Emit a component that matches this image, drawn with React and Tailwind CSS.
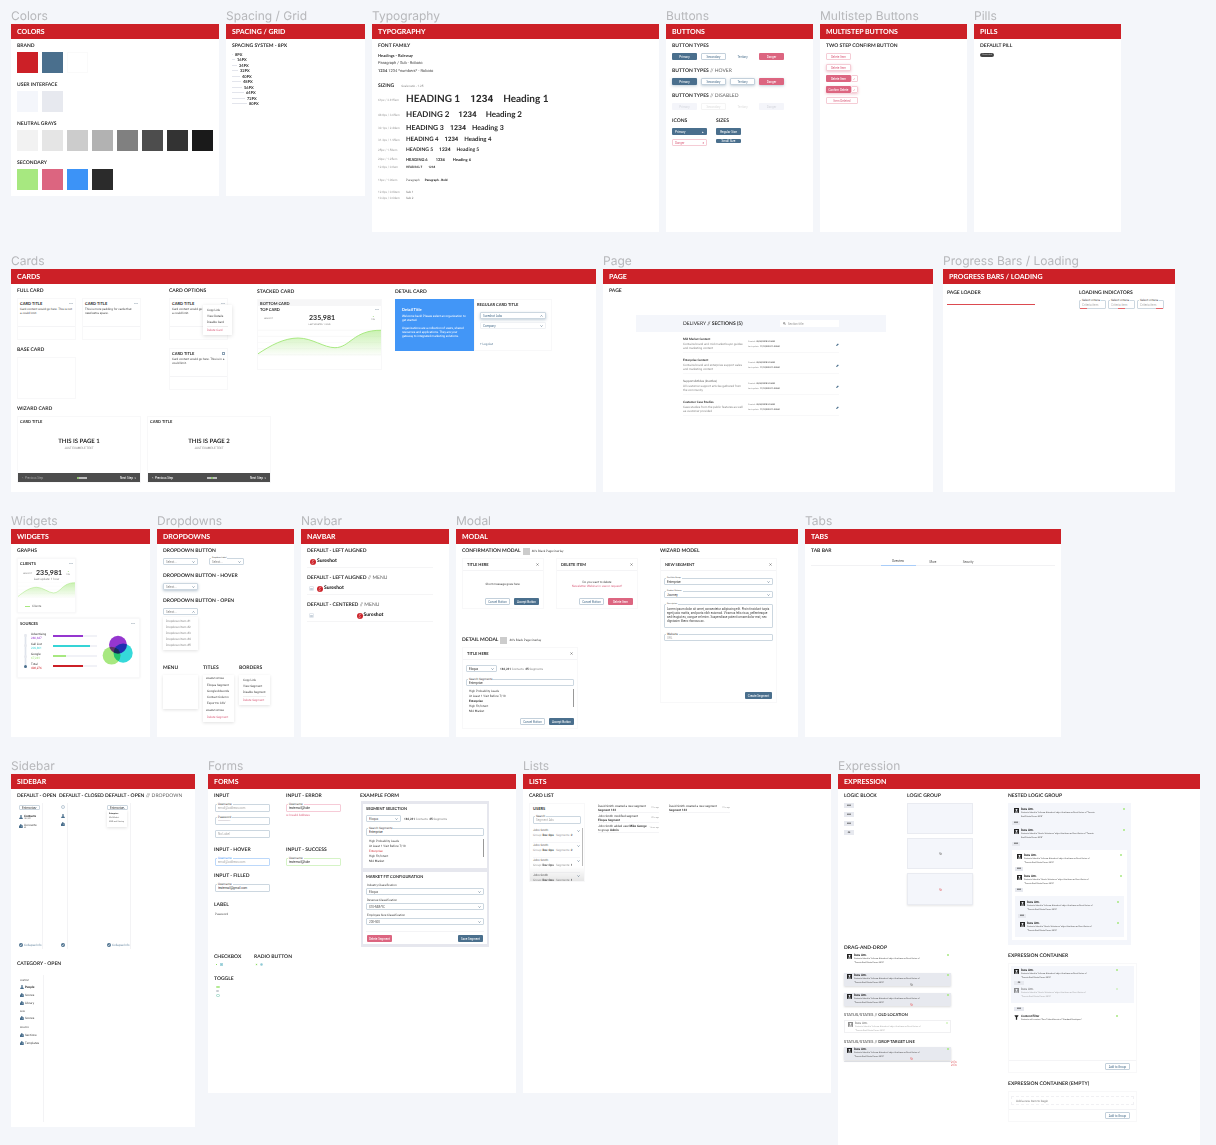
import React from "react";

const heading = "font-['Lato'] font-bold text-[#2b2b2b] whitespace-nowrap";

function Board({ label, title, className = "", boardClass = "", children }) {
  return (
    <section className={"flex min-w-0 flex-col " + className}>
      <h2 className="whitespace-nowrap font-['Inter'] text-[12px] leading-[16px] text-[#b7b8bb]">{label}</h2>
      <div className={"bg-white " + boardClass}>
        <h3 className="flex h-[15px] items-center bg-[#cc2027] pl-[6px] font-['Lato'] text-[7px] font-bold leading-[8px] text-white">
          {title}
        </h3>
        <div className="pl-[6px] pt-[4px]">{children}</div>
      </div>
    </section>
  );
}

function Sec({ title, note, gap = "gap-[4px]", className = "", children }) {
  return (
    <section className={"flex flex-col items-start " + gap + " " + className}>
      <h4 className={"text-[5px] leading-[6px] " + heading}>
        {title}
        {note && <span className="font-normal text-[#666]"> {note}</span>}
      </h4>
      {children}
    </section>
  );
}

const btnKinds = {
  primary: "bg-[#4a6f8d] text-white",
  secondary: "border border-[#c3d0db] bg-white text-[#4a6f8d]",
  tertiary: "text-[#4a6f8d]",
  danger: "bg-[#dc6580] text-white",
  dangerLine: "border border-[#f5ccd5] bg-white text-[#dc6580]",
  off: "bg-[#f4f5fa] text-[#d5d7de]",
  offLine: "border border-[#f4f4f4] bg-white text-[#dddddd]",
  offText: "text-[#dddddd]",
};

function Btn({ kind = "primary", size = "h-[7px] w-[25px]", className = "justify-center", children, ...rest }) {
  return (
    <button
      type="button"
      className={"flex shrink-0 items-center whitespace-nowrap rounded-[1px] text-[3px] leading-[4px] " + btnKinds[kind] + " " + size + " " + className}
      {...rest}
    >
      {children}
    </button>
  );
}

function Chevron({ className = "", up }) {
  return (
    <svg viewBox="0 0 6 4" className={"h-[2px] w-[3px] " + className} fill="none" stroke="#5f7a90" strokeWidth="1.4" aria-hidden="true">
      <path d={up ? "M1 3 L3 1 L5 3" : "M1 1 L3 3 L5 1"} />
    </svg>
  );
}

const borders = {
  plain: "border-[#ccd7e0]",
  soft: "border-[#f0f2f5]",
  blue: "border-[#bcd8fa]",
  error: "border-[#f6cbd7]",
  success: "border-[#d5f3c6]",
};

function Pick({ value, label, floating, size = "h-[7px] w-[35px]", tone = "plain", up, color = "text-[#888]", className = "" }) {
  return (
    <label className={"relative block shrink-0 rounded-[1px] border bg-white " + borders[tone] + " " + size + " " + className}>
      {floating && (
        <span className="absolute -top-[3px] left-[1px] whitespace-nowrap bg-white px-[1px] text-[2px] leading-[4px] text-[#444]">{floating}</span>
      )}
      <select aria-label={label || floating} className={"block h-full w-full appearance-none bg-transparent pl-[2px] text-[3px] leading-[4px] outline-none " + color}>
        <option>{value}</option>
      </select>
      <Chevron up={up} className="pointer-events-none absolute right-[2px] top-1/2 -translate-y-1/2" />
    </label>
  );
}

function Field({ label, value, placeholder, tone = "plain", size = "h-[8px] w-[55px]", labelColor = "text-[#444]", aria, className = "" }) {
  return (
    <label className={"relative block shrink-0 rounded-[1px] border bg-white " + borders[tone] + " " + size + " " + className}>
      {label && (
        <span className={"absolute -top-[3px] left-[1px] whitespace-nowrap bg-white px-[1px] text-[3px] leading-[4px] " + labelColor}>{label}</span>
      )}
      <input
        aria-label={aria || label}
        defaultValue={value}
        placeholder={placeholder}
        className="block h-full w-full bg-transparent px-[2px] text-[3px] leading-[4px] text-[#333] outline-none placeholder:text-[#aaa]"
      />
    </label>
  );
}

function Dots() {
  return (
    <svg viewBox="0 0 10 3" className="h-[1px] w-[4px]" fill="#6d8294" aria-hidden="true">
      <circle cx="1.5" cy="1.5" r="1.3" /><circle cx="5" cy="1.5" r="1.3" /><circle cx="8.5" cy="1.5" r="1.3" />
    </svg>
  );
}

function Cross() {
  return (
    <svg viewBox="0 0 8 8" className="h-[3px] w-[3px]" stroke="#555" strokeWidth="1.3" aria-hidden="true">
      <path d="M1 1 L7 7 M7 1 L1 7" />
    </svg>
  );
}

/* ---------- Colors ---------- */
const palettes = [
  ["BRAND", ["bg-[#cc2027]", "bg-[#4a6f8d]", "bg-white border border-[#fafafa]"]],
  ["USER INTERFACE", ["bg-[#f4f6fb]", "bg-[#e7e9ef]"]],
  ["NEUTRAL GRAYS", ["bg-[#f2f2f2]", "bg-[#e5e5e5]", "bg-[#cccccc]", "bg-[#b2b2b2]", "bg-[#808080]", "bg-[#4d4d4d]", "bg-[#333333]", "bg-[#1a1a1a]"]],
  ["SECONDARY", ["bg-[#a7e880]", "bg-[#dc6580]", "bg-[#3c93f7]", "bg-[#2b2b2b]"]],
];

function Colors() {
  return (
    <div className="flex flex-col gap-[9px]">
      {palettes.map(([name, list]) => (
        <Sec key={name} title={name} gap="gap-[3px]">
          <div className="flex gap-[4px]">
            {list.map((c) => <div key={c} className={"size-[21px] " + c} />)}
          </div>
        </Sec>
      ))}
    </div>
  );
}

/* ---------- Spacing ---------- */
const steps = [["8PX", 1], ["16PX", 3], ["24PX", 5], ["32PX", 6], ["40PX", 8], ["48PX", 9], ["56PX", 10], ["64PX", 12], ["72PX", 13], ["80PX", 15]];

function Spacing() {
  return (
    <Sec title="SPACING SYSTEM - 8PX" gap="gap-[3px]">
      <ul className="flex h-[54px] flex-col justify-between">
        {steps.map(([n, w]) => (
          <li key={n} className={"flex items-center gap-[2px] text-[4px] leading-[5px] " + heading}>
            <span className="h-px bg-[#e3e5ec]" style={{ width: w }} />
            {n}
          </li>
        ))}
      </ul>
    </Sec>
  );
}

/* ---------- Typography ---------- */
const sizes = [
  ["61px / 3.815em", "HEADING 1", "Heading 1", "h-[15px]", "text-[10px] leading-[12px] gap-[10px]"],
  ["48.8px / 3.05em", "HEADING 2", "Heading 2", "h-[15px]", "text-[8px] leading-[10px] gap-[9px]"],
  ["39.1px / 2.44em", "HEADING 3", "Heading 3", "h-[12px]", "text-[7px] leading-[8px] gap-[6px]"],
  ["31.3px / 1.95em", "HEADING 4", "Heading 4", "h-[11px]", "text-[6px] leading-[7px] gap-[6px]"],
  ["25px / 1.56em", "HEADING 5", "Heading 5", "h-[10px]", "text-[5px] leading-[6px] gap-[6px]"],
  ["20px / 1.25em", "HEADING 6", "Heading 6", "h-[8px]", "text-[4px] leading-[5px] gap-[8px]"],
  ["12.8px / 0.8em", "HEADING 7", "", "h-[7px]", "text-[3px] leading-[4px] gap-[6px]"],
];

function SizeLabel({ children }) {
  return <span className="w-[28px] shrink-0 whitespace-nowrap text-[3px] leading-[4px] text-[#999]">{children}</span>;
}

function Typography() {
  return (
    <div>
      <Sec title="FONT FAMILY">
        <div className="text-[4px] leading-[8px] text-[#444]">
          <p className="font-['Lato'] font-bold leading-[5px] text-[#333]">Headings - Raleway</p>
          <p className="leading-[9px]">Paragraph / Sub - Roboto</p>
          <p className="leading-[8px]"><b>1234</b> 1234 *numbers* - Roboto</p>
        </div>
      </Sec>
      <div className="mt-[8px] flex items-center gap-[7px]">
        <h4 className={"text-[5px] leading-[6px] " + heading}>SIZING</h4>
        <span className="text-[3px] leading-[4px] text-[#888]">Scale ratio - 1.25</span>
      </div>
      <div className="mt-[3px]">
        {sizes.map(([px, a, b, row, cls]) => (
          <div key={a} className={"flex items-center " + row}>
            <SizeLabel>{px}</SizeLabel>
            <div className={"flex items-baseline " + heading + " " + cls}>
              <span>{a}</span>
              <span className="font-['Roboto']">1234</span>
              {b && <span>{b}</span>}
            </div>
          </div>
        ))}
        <div className="mt-[7px] flex items-center">
          <SizeLabel>16px / 1.00em</SizeLabel>
          <span className="text-[3px] leading-[6px] text-[#555]">Paragraph</span>
          <b className="ml-[5px] text-[3px] leading-[6px] text-[#222]">Paragraph - Bold</b>
        </div>
        <div className="mt-[6px] flex items-center leading-[6px]">
          <SizeLabel>12.8px / 0.80em</SizeLabel><span className="text-[#777]">Sub 1</span>
        </div>
        <div className="flex items-center leading-[6px]">
          <SizeLabel>10.2px / 0.64em</SizeLabel><span className="text-[#777]">Sub 2</span>
        </div>
      </div>
    </div>
  );
}

/* ---------- Buttons ---------- */
function ButtonRow({ kinds, shadow = "", disabled }) {
  const names = ["Primary", "Secondary", "Tertiary", "Danger"];
  return (
    <div className="flex gap-[4px]">
      {names.map((n, i) => (
        <Btn key={n} kind={kinds[i]} disabled={disabled} className={"justify-center " + shadow}>{n}</Btn>
      ))}
    </div>
  );
}

function Buttons() {
  return (
    <div className="flex flex-col gap-[8px]">
      <Sec title="BUTTON TYPES"><ButtonRow kinds={["primary", "secondary", "tertiary", "danger"]} /></Sec>
      <Sec title="BUTTON TYPES" note="// HOVER">
        <ButtonRow kinds={["primary", "secondary", "secondary", "danger"]} shadow="shadow-[0_1px_3px_rgba(74,111,141,0.35)]" />
      </Sec>
      <Sec title="BUTTON TYPES" note="// DISABLED"><ButtonRow kinds={["off", "offLine", "offText", "off"]} disabled /></Sec>
      <div className="flex gap-[9px]">
        <Sec title="ICONS">
          <Btn size="h-[7px] w-[35px]" className="justify-between px-[3px]">Primary <span>▴</span></Btn>
          <Btn kind="dangerLine" size="h-[7px] w-[35px]" className="justify-between px-[2px]">Danger <span>×</span></Btn>
        </Sec>
        <Sec title="SIZES">
          <Btn>Regular Size</Btn>
          <Btn size="h-[4px] w-[25px]">Small Size</Btn>
        </Sec>
      </div>
    </div>
  );
}

function Multistep() {
  return (
    <Sec title="TWO STEP CONFIRM BUTTON">
      <Btn kind="dangerLine">Delete Item</Btn>
      <Btn kind="dangerLine" className="justify-center shadow-[0_1px_3px_rgba(220,101,128,0.4)]">Delete Item</Btn>
      <div className="flex">
        <Btn kind="danger">Delete Item</Btn>
        <Btn kind="dangerLine" size="size-[7px]">✓</Btn>
      </div>
      <div className="flex shadow-[0_1px_3px_rgba(220,101,128,0.4)]">
        <Btn kind="danger">Confirm Delete</Btn>
        <Btn kind="dangerLine" size="size-[7px]">✓</Btn>
      </div>
      <Btn kind="dangerLine" size="h-[7px] w-[32px]">Item Deleted</Btn>
    </Sec>
  );
}

/* ---------- Cards ---------- */
const cardBox = "border border-[#f8f8f9] bg-white";

function Title({ children, className = "" }) {
  return <h5 className={"text-[4px] leading-[5px] " + heading + " " + className}>{children}</h5>;
}

function TextCard({ icon, text, children }) {
  return (
    <article className={"relative flex h-[42px] w-[59px] flex-col " + cardBox}>
      <div className="flex items-center justify-between px-[2px] pt-[2px]">
        <Title>CARD TITLE</Title>
        {icon}
      </div>
      <p className="grow px-[2px] pt-[1px] text-[3px] leading-[4px] text-[#444]">{text}</p>
      <div className="h-[13px] border-t border-[#f4f4f6]" />
      {children}
    </article>
  );
}

const curve = "M0 77 C40 50 80 28 122 28 C165 28 200 58 234 58 C280 58 290 3 374 4";

function Area({ id, className }) {
  return (
    <svg viewBox="0 0 374 90" preserveAspectRatio="none" className={"block w-full " + className} aria-hidden="true">
      <defs>
        <linearGradient id={id} x1="0" y1="0" x2="0" y2="1">
          <stop offset="0" stopColor="#a7e880" stopOpacity="0.6" />
          <stop offset="1" stopColor="#a7e880" stopOpacity="0" />
        </linearGradient>
      </defs>
      <path d="M0 4H374M0 23H374M0 42H374M0 61H374M0 80H374" stroke="#f6f6f6" strokeWidth="2" />
      <path d={curve + " V86 H0 Z"} fill={"url(#" + id + ")"} />
      <path d={curve} fill="none" stroke="#a7e880" strokeWidth="3" />
    </svg>
  );
}

function WizardCard({ n }) {
  return (
    <article className={"flex h-[67px] w-[124px] flex-col " + cardBox}>
      <Title className="px-[2px] pt-[2px]">CARD TITLE</Title>
      <div className="flex grow flex-col items-center pt-[14px]">
        <strong className={"text-[6px] leading-[7px] " + heading}>THIS IS PAGE {n}</strong>
        <span className="text-[3px] leading-[6px] text-[#888]">JUST EXAMPLE TEXT</span>
      </div>
      <div className="flex h-[9px] items-center justify-between bg-[#4d4d4d] px-[4px] text-[3px] text-white">
        <button type="button" className={n === 1 ? "text-[#a0a0a0]" : "text-white"}>« &nbsp;Previous Step</button>
        <span className="flex">
          {[1, 2, 3, 4, 5].map((i) => (
            <i key={i} className={"size-[2px] rounded-full " + (i === (n === 1 ? 1 : 3) ? "bg-[#a7e880]" : "bg-[#e2e2e2]")} />
          ))}
        </span>
        <button type="button">Next Step &nbsp;»</button>
      </div>
    </article>
  );
}

function Cards() {
  return (
    <div className="flex flex-col gap-[7px]">
      <div className="flex items-start">
        <div className="flex w-[152px] shrink-0 flex-col gap-[7px]">
          <Sec title="FULL CARD">
            <div className="flex gap-[6px]">
              <TextCard icon={<Dots />} text="Card content would go here. This is not a could limit." />
              <TextCard icon={<Dots />} text="This is more padding for cards that need extra space." />
            </div>
          </Sec>
          <Sec title="BASE CARD"><div className={"h-[42px] w-[59px] " + cardBox} /></Sec>
        </div>
        <div className="flex w-[88px] shrink-0 flex-col gap-[8px]">
          <Sec title="CARD OPTIONS">
            <TextCard icon={<Dots />} text="Card content would go here. This is not a could limit.">
              <ul className="absolute left-[33px] top-[6px] w-[29px] bg-white px-[4px] py-[2px] text-[3px] leading-[6px] text-[#444] shadow-[0_1px_4px_rgba(0,0,0,0.14)]">
                <li>Copy Link</li>
                <li>View Details</li>
                <li>Disable Card</li>
                <li className="mt-px border-t border-[#eee] text-[#dc6580]">Delete Card</li>
              </ul>
            </TextCard>
          </Sec>
          <TextCard icon={<span className="size-[3px] border border-[#8aa0b3]" />} text="Card content would go here. This is in a could limit." />
        </div>
        <Sec title="STACKED CARD" className="w-[138px] shrink-0 pt-px">
          <article className={"flex h-[71px] w-[125px] flex-col " + cardBox}>
            <div className="h-[6px] bg-[#f6f6f7] px-[2px] pt-[1px]"><Title>BOTTOM CARD</Title></div>
            <div className="flex items-center justify-between px-[2px] pt-[1px]"><Title>TOP CARD</Title><Dots /></div>
            <div className="flex items-center justify-between px-[6px] pt-[3px] text-[2px] text-[#777]">
              <span>JAN 2017</span>
              <strong className="font-['Lato'] text-[7px] leading-[7px] text-[#333]">235,981</strong>
              <span className="text-center leading-[3px]"><span className="block text-[#77c94a]">▴</span>19%</span>
            </div>
            <p className="pt-px text-center text-[2px] leading-[4px] text-[#777]">LAST UPDATED: 1 HOUR</p>
            <Area id="stackFill" className="mt-[2px] h-[29px]" />
          </article>
        </Sec>
        <Sec title="DETAIL CARD" className="pt-px">
          <article className="flex h-[52px] w-[157px]">
            <div className="w-[79px] bg-[#4296f7] px-[7px] pt-[8px] text-[3px] leading-[4px] text-white">
              <h5 className="pb-[2px] font-['Lato'] text-[4px] font-bold leading-[5px]">Detail Title</h5>
              <p>Welcome back! Please select an organization to get started.</p>
              <p className="pt-[4px]">Organizations are a collection of users, shared resources and applications. They are your gateway to integrated marketing solutions.</p>
            </div>
            <div className={"flex grow flex-col px-[2px] " + cardBox}>
              <Title className="pt-[2px]">REGULAR CARD TITLE</Title>
              <div className="flex flex-col gap-[3px] px-[3px] pt-[5px]">
                <Pick label="Organization" value="Sureshot Labs" size="h-[7px] w-full" color="text-[#4a6f8d]" className="shadow-[0_1px_3px_rgba(74,111,141,0.35)]" up />
                <Pick label="Company" value="Company" size="h-[7px] w-full" tone="soft" color="text-[#4a6f8d]" />
                <a href="#logout" className="pt-[10px] text-[#4a6f8d]">+ Log Out</a>
              </div>
            </div>
          </article>
        </Sec>
      </div>
      <Sec title="WIZARD CARD">
        <div className="flex gap-[6px]"><WizardCard n={1} /><WizardCard n={2} /></div>
      </Sec>
    </div>
  );
}

/* ---------- Page ---------- */
const pageRows = [
  ["Mid Market Content", "Contains brand and mid market buyer guides and marketing content", true],
  ["Enterprise Content", "Contains brand and enterprise support sales and marketing content", true],
  ["Support Articles (Inactive)", "All customer support articles gathered from the community", false],
  ["Customer Case Studies", "Case studies from the public features as well as customer provided", true],
];

function PageBoard() {
  return (
    <div>
      <Sec title="PAGE" />
      <div className="ml-[27px] mt-[21px] w-[250px]">
        <div className="flex h-[17px] items-center justify-between bg-[#f4f6fb] pl-[47px] pr-[47px]">
          <h5 className={"text-[5px] leading-[6px] " + heading}><span className="font-normal">DELIVERY //</span> SECTIONS (5)</h5>
          <label className="flex h-[7px] w-[59px] items-center gap-[2px] bg-white px-[3px]">
            <svg viewBox="0 0 8 8" className="size-[3px]" fill="none" stroke="#333" strokeWidth="1.2" aria-hidden="true"><circle cx="3.3" cy="3.3" r="2.4" /><path d="M5 5 L7.5 7.5" /></svg>
            <input aria-label="Search" placeholder="Section title" className="w-full bg-transparent text-[3px] leading-[4px] outline-none placeholder:text-[#999]" />
          </label>
        </div>
        <ul className="px-[47px]">
          {pageRows.map(([t, d, on]) => (
            <li key={t} className="flex h-[21px] items-start border-b border-[#f8f8f9] pt-[5px] text-[3px] leading-[4px] text-[#888]">
              <div className="w-[65px]">
                <h6 className={"font-['Lato'] " + (on ? "font-bold text-[#222]" : "text-[#555]")}>{t}</h6>
                <p className="w-[60px] pt-px">{d}</p>
              </div>
              <dl className="grow pt-[3px] text-[2px] leading-[5px]">
                <div className="flex gap-px"><dt>Created:</dt><dd className="font-bold text-[#555]">09/24/2018 9:10AM</dd></div>
                <div className="flex gap-px"><dt>Last update:</dt><dd className="font-bold text-[#555]">11/12/2018 11:22AM</dd></div>
              </dl>
              <button type="button" aria-label="Edit" className="mt-[6px]">
                <svg viewBox="0 0 8 8" className="size-[3px]" fill="#4a6f8d"><path d="M0 8 L1 5 L5 1 L7.5 3.2 L3.4 7.2 Z" /></svg>
              </button>
            </li>
          ))}
        </ul>
      </div>
    </div>
  );
}

function Progress() {
  const pos = ["justify-start", "justify-center", "justify-end"];
  return (
    <div className="-ml-[2px] flex items-start pt-[2px]">
      <Sec title="PAGE LOADER" className="w-[132px]">
        <div className="mt-[4px] h-px w-[88px] bg-[#dc4a50]" />
      </Sec>
      <Sec title="LOADING INDICATORS">
        <div className="flex gap-[2px]">
          {pos.map((p) => (
            <div key={p} className="relative">
              <Field label="Select criteria" placeholder="Criteria item" size="h-[9px] w-[27px]" />
              <div className={"absolute inset-x-[1px] bottom-0 flex " + p}><span className="h-px w-[7px] bg-[#e5656a]" /></div>
            </div>
          ))}
        </div>
      </Sec>
    </div>
  );
}

/* ---------- Widgets ---------- */
const sources = [
  ["Advertising", "240,647", "bg-[#9536cf]", "text-[#9536cf]", "w-[30px]"],
  ["Call List", "209,801", "bg-[#35d4d6]", "text-[#35d4d6]", "w-[37px]"],
  ["Google", "67,241", "bg-[#a7e880]", "text-[#a7e880]", "w-[13px]"],
  ["Total", "498,276", "bg-[#cc2027]", "text-[#cc2027]", "w-[30px]"],
];

function Widgets() {
  return (
    <div className="flex flex-col gap-[5px]">
      <Sec title="GRAPHS">
        <article className={"flex h-[55px] w-[59px] flex-col shadow-[0_0_2px_rgba(0,0,0,0.06)] " + cardBox}>
          <div className="flex items-center justify-between px-[2px] pt-[2px]"><Title>CLIENTS</Title><Dots /></div>
          <div className="flex items-center justify-between px-[5px] pt-[4px] text-[2px] text-[#777]">
            <span>JAN 2017</span>
            <strong className="font-['Lato'] text-[7px] leading-[7px] text-[#333]">235,981</strong>
            <span className="text-center leading-[3px]"><span className="block text-[#77c94a]">▴</span>19%</span>
          </div>
          <p className="text-center text-[3px] leading-[4px] text-[#888]">Last update: 1 hour</p>
          <Area id="clientFill" className="mt-px h-[17px]" />
          <div className="flex items-center gap-[2px] px-[7px] pt-[5px] text-[#666]"><i className="h-px w-[5px] bg-[#a7e880]" />Clients</div>
        </article>
      </Sec>
      <article className={"h-[60px] w-[123px] px-[2px] pt-[2px] shadow-[0_0_2px_rgba(0,0,0,0.08)] " + cardBox}>
        <div className="flex items-center justify-between pr-[2px]"><Title>SOURCES</Title><Dots /></div>
        <div className="flex items-start pt-[4px]">
          <div className="ml-[4px] mt-[4px] flex h-[34px] w-[3px] flex-col items-center justify-between bg-gradient-to-r from-white via-[#dfe4ec] to-white">
            {[0, 1, 2, 3].map((i) => <i key={i} className={"size-[3px] rounded-full " + (i === 3 ? "bg-[#4a6f8d]" : "bg-[#e7e9ef]")} />)}
          </div>
          <ul className="flex w-[72px] shrink-0 flex-col pl-[4px] pt-px">
            {sources.map(([n, v, bg, tx, w]) => (
              <li key={n} className="flex h-[10px] items-center text-[3px] leading-[4px]">
                <div className="w-[22px] shrink-0 text-[#333]">{n}<div className={tx}>{v}</div></div>
                <div className="h-[2px] w-[44px] bg-[#f1f2f7]"><div className={"h-[2px] " + bg + " " + w} /></div>
              </li>
            ))}
          </ul>
          <svg viewBox="0 0 100 96" className="ml-[3px] mt-[5px] h-[31px] w-[32px] shrink-0" aria-hidden="true">
            <circle cx="50" cy="30" r="28" fill="#9536cf" />
            <circle cx="66" cy="56" r="30" fill="#35d9da" style={{ mixBlendMode: "multiply" }} />
            <circle cx="30" cy="64" r="28" fill="#a7e880" style={{ mixBlendMode: "multiply" }} />
          </svg>
        </div>
      </article>
    </div>
  );
}

/* ---------- Dropdowns ---------- */
const menuBox = "bg-white shadow-[0_1px_3px_rgba(0,0,0,0.12)]";

function Dropdowns() {
  return (
    <div className="flex flex-col">
      <Sec title="DROPDOWN BUTTON">
        <div className="flex gap-[11px]">
          <Pick label="Default" value="Select..." />
          <Pick floating="Dropdown Label" value="Select..." />
        </div>
      </Sec>
      <Sec title="DROPDOWN BUTTON - HOVER" className="mt-[8px]">
        <Pick label="Hover" value="Select..." className="shadow-[0_1px_3px_rgba(74,111,141,0.4)]" />
      </Sec>
      <Sec title="DROPDOWN BUTTON - OPEN" className="mt-[8px]">
        <Pick label="Open" value="Select..." up />
        <ul className={"-mt-[2px] h-[33px] w-[35px] px-[3px] py-px text-[3px] leading-[6px] text-[#888] " + menuBox}>
          {[1, 2, 3, 4, 5].map((n) => <li key={n}>Dropdown Item #{n}</li>)}
        </ul>
      </Sec>
      <div className="mt-[15px] flex items-start">
        <Sec title="MENU" className="w-[40px]"><div className={"h-[34px] w-[35px] " + menuBox} /></Sec>
        <Sec title="TITLES" className="w-[36px]">
          <ul className={"w-[31px] px-[4px] py-px text-[3px] leading-[6px] text-[#444] " + menuBox}>
            <li className="-ml-px whitespace-nowrap text-[2px] text-[#222]">SEGMENT OPTIONS</li>
            <li>Eloqua Segment</li><li>Google Adwords</li><li>Contact Column</li><li>Export to CSV</li>
            <li className="-ml-px mt-[2px] whitespace-nowrap text-[2px] text-[#222]">SEGMENT OPTIONS</li>
            <li className="pb-px text-[#dc6580]">Delete Segment</li>
          </ul>
        </Sec>
        <Sec title="BORDERS">
          <ul className={"w-[31px] whitespace-nowrap px-[4px] py-[2px] text-[3px] leading-[6px] text-[#444] " + menuBox}>
            <li>Copy Link</li><li>View Segment</li><li>Disable Segment</li>
            <li className="mt-px border-t border-[#f0f0f0] text-[#dc6580]">Delete Segment</li>
          </ul>
        </Sec>
      </div>
    </div>
  );
}

/* ---------- Navbar ---------- */
function Logo() {
  return (
    <span className="flex items-center gap-px font-['Lato'] text-[5px] font-black leading-[7px] text-[#1a1a1a]">
      <svg viewBox="0 0 24 24" className="size-[6px]" aria-hidden="true">
        <circle cx="12" cy="12" r="12" fill="#cc2027" />
        <path d="M17 7 C10 4 6 9 11 12 C17 15 12 20 6 16 M12 5 V2 M12 22 V19" fill="none" stroke="#fff" strokeWidth="1.6" />
      </svg>
      Sureshot
    </span>
  );
}

function Burger() {
  return (
    <button type="button" aria-label="Menu" className="flex size-[5px] items-center justify-center rounded-[1px] border border-[#e3e8ee]">
      <svg viewBox="0 0 8 6" className="h-[2px] w-[3px]" stroke="#8aa0b3" strokeWidth="1.2" aria-hidden="true"><path d="M0 1H8M0 3H8M0 5H8" /></svg>
    </button>
  );
}

function Navbar() {
  const bar = "flex h-[14px] w-[126px] items-center border-b border-[#f5f5f6]";
  return (
    <div className="flex flex-col gap-[7px]">
      <Sec title="DEFAULT - LEFT ALIGNED" gap="gap-0"><nav className={bar + " pl-[3px] pt-[2px]"}><Logo /></nav></Sec>
      <Sec title="DEFAULT - LEFT ALIGNED" note="// MENU" gap="gap-0"><nav className={bar + " gap-[3px] pl-[2px] pt-[2px]"}><Burger /><Logo /></nav></Sec>
      <Sec title="DEFAULT - CENTERED" note="// MENU" gap="gap-0">
        <nav className={bar + " pl-[2px] pr-[7px] pt-[2px]"}><Burger /><div className="flex grow justify-center"><Logo /></div></nav>
      </Sec>
    </div>
  );
}

/* ---------- Modal ---------- */
function Dialog({ title, size, children }) {
  return (
    <article className={"flex flex-col " + cardBox + " " + size}>
      <div className="flex h-[12px] items-center justify-between border-b border-[#f4f4f6] px-[4px]">
        <Title>{title}</Title>
        <button type="button" aria-label="Close"><Cross /></button>
      </div>
      {children}
    </article>
  );
}

function OverlayTitle({ children }) {
  return (
    <div className="flex h-[6px] items-center gap-[2px]">
      <h4 className={"text-[5px] leading-[6px] " + heading}>{children}</h4>
      <i className="size-[7px] bg-[#cccccc]" />
      <span className="text-[3px] leading-[4px] text-[#444]">40% Black Page Overlay</span>
    </div>
  );
}

function SegmentList({ hot = "font-bold text-[#222]" }) {
  return (
    <div className="flex justify-between">
      <ul className="pl-[3px] text-[3px] leading-[5px] text-[#444]">
        <li>High Probability Leads</li><li>At Least 1 Visit Before 7/18</li><li className={hot}>Enterprise</li><li>High Fit/Intent</li><li>Mid Market</li>
      </ul>
      <i className="h-[18px] w-px bg-[#999]" />
    </div>
  );
}

function Counts() {
  return <span className="whitespace-nowrap text-[3px] leading-[4px] text-[#888]"><b className="text-[#444]">182,231</b> Contacts &nbsp;<b className="text-[#444]">45</b> Segments</span>;
}

function Modals() {
  return (
    <div className="flex items-start">
      <div className="flex w-[198px] shrink-0 flex-col">
        <OverlayTitle>CONFIRMATION MODAL</OverlayTitle>
        <div className="mt-[4px] flex gap-[12px]">
          <Dialog title="TITLE HERE" size="h-[51px] w-[82px]">
            <p className="grow pt-[11px] text-center text-[3px] leading-[4px] text-[#444]">Short message goes here.</p>
            <div className="flex justify-end gap-[4px] px-[4px] pb-[3px]"><Btn kind="secondary">Cancel Button</Btn><Btn>Accept Button</Btn></div>
          </Dialog>
          <Dialog title="DELETE ITEM" size="h-[51px] w-[82px]">
            <p className="grow pt-[9px] text-center text-[3px] leading-[4px] text-[#444]">Do you want to delete<br /><span className="text-[#dc6580]">Newsletter Webinar in use or request?</span></p>
            <div className="flex justify-end gap-[4px] px-[4px] pb-[3px]"><Btn kind="secondary">Cancel Button</Btn><Btn kind="danger">Delete Item</Btn></div>
          </Dialog>
        </div>
        <div className="mt-[28px]"><OverlayTitle>DETAIL MODAL</OverlayTitle></div>
        <div className="mt-[4px]">
          <Dialog title="TITLE HERE" size="h-[82px] w-[116px]">
            <div className="flex grow flex-col px-[3px] pt-[5px]">
              <div className="flex items-center gap-[3px]"><Pick label="Source" value="Eloqua" size="h-[7px] w-[31px]" color="text-[#333]" /><Counts /></div>
              <Field label="Search Segments" value="Enterprise" size="h-[7px] w-full" className="mb-[3px] mt-[7px]" />
              <SegmentList />
            </div>
            <div className="flex justify-end gap-[4px] px-[3px] pb-[3px]"><Btn kind="secondary">Cancel Button</Btn><Btn>Accept Button</Btn></div>
          </Dialog>
        </div>
      </div>
      <Sec title="WIZARD MODEL">
        <Dialog title="NEW SEGMENT" size="h-[145px] w-[117px]">
          <div className="flex grow flex-col gap-[6px] px-[3px] pt-[7px]">
            <Pick floating="Portfolio Group" value="Enterprise" size="h-[7px] w-full" color="text-[#333]" />
            <Pick floating="Product Release" value="Journey" size="h-[7px] w-full" color="text-[#333]" />
            <label className="relative block h-[24px] rounded-[1px] border border-[#ccd7e0]">
              <span className="absolute -top-[3px] left-[1px] bg-white px-[1px] text-[2px] leading-[4px] text-[#444]">Description</span>
              <textarea
                className="block h-full w-full resize-none overflow-hidden bg-transparent px-[2px] pt-[2px] text-[3px] leading-[4px] text-[#444] outline-none"
                defaultValue="Lorem ipsum dolor sit amet, consectetur adipiscing elit. Proin tincidunt turpis eget justo mattis, sed porta nibh euismod. Vivamus felis risus, pellentesque sed feugiat eu, congue vel enim. Suspendisse potenti ornare dolor erat, nec dignissim libero rhoncus ac."
              />
            </label>
            <Field label="Website" placeholder="URL" size="h-[7px] w-full" />
          </div>
          <div className="flex justify-end px-[4px] pb-[3px]"><Btn size="h-[7px] w-[27px]">Create Segment</Btn></div>
        </Dialog>
      </Sec>
    </div>
  );
}

/* ---------- Tabs ---------- */
function Tabs() {
  return (
    <Sec title="TAB BAR">
      <div role="tablist" className="flex w-[244px] justify-center border-b border-[#f2f2f4] text-[3px] leading-[6px]">
        {["Overview", "More", "Security"].map((t, i) => (
          <button key={t} role="tab" type="button" aria-selected={i === 0} className={"-mb-px w-[35px] pb-px " + (i === 0 ? "border-b border-[#a9cdf9] text-[#444]" : "text-[#555]")}>{t}</button>
        ))}
      </div>
    </Sec>
  );
}

/* ---------- Sidebar ---------- */
function Glyph({ kind, size = "size-[4px]", color = "#4a6f8d" }) {
  return (
    <svg viewBox="0 0 16 16" className={"shrink-0 " + size} fill={color} aria-hidden="true">
      {kind === "user" && <path d="M8 0a4 4 0 0 1 2 7v2l5 3v4H1v-4l5-3V7a4 4 0 0 1 2-7Z" />}
      {kind === "org" && <path d="M0 6h4V1h6v4h5v11H0Z M10 8v2h2V8Z" fillRule="evenodd" />}
      {kind === "check" && <path fillRule="evenodd" d="M8 0a8 8 0 1 1 0 16A8 8 0 0 1 8 0ZM3 8l4 4 6-6-2-1-4 4-2-2Z" />}
    </svg>
  );
}

function SideItem({ kind, children, sub, bold }) {
  return (
    <li className="flex items-center gap-[1px] text-[3px] leading-[4px] text-[#444]">
      <Glyph kind={kind} />
      {children && (
        <a href="#item" className={bold ? "font-bold text-[#222]" : ""}>{children}{sub && <span className="block text-[2px] font-normal leading-[2px] text-[#666]">{sub}</span>}</a>
      )}
    </li>
  );
}

function Panel({ size, children, foot }) {
  return (
    <nav className={"flex h-[146px] flex-col border-r border-[#f3f3f5] " + size}>
      <div className="flex grow flex-col gap-[4px] pl-[2px] pt-[2px]">{children}</div>
      <div className="flex items-center gap-[1px] whitespace-nowrap pb-[2px] pl-[2px] text-[3px] leading-[4px] text-[#6b8aa3]"><Glyph kind="check" />{foot}</div>
    </nav>
  );
}

function Sidebar() {
  return (
    <div>
      <div className="flex items-start">
        <Sec title="DEFAULT - OPEN" className="w-[42px] shrink-0">
          <Panel size="w-[26px]" foot="Collapse Info">
            <Pick label="Account" value="Enterprise" size="h-[5px] w-[21px]" color="text-[#444]" />
            <ul className="flex flex-col gap-[3px]">
              <SideItem kind="user" sub="182,231" bold>Contacts</SideItem>
              <SideItem kind="org" sub="45">Accounts</SideItem>
            </ul>
          </Panel>
        </Sec>
        <Sec title="DEFAULT - CLOSED" className="w-[46px] shrink-0">
          <Panel size="w-[9px]">
            <i className="size-[4px] rounded-full border border-[#bccad6]" />
            <ul className="flex flex-col gap-[4px] pt-px"><SideItem kind="user" /><SideItem kind="org" /></ul>
          </Panel>
        </Sec>
        <Sec title="DEFAULT - OPEN" note="/// DROPDOWN">
          <Panel size="w-[26px]" foot="Collapse Info">
            <div className="relative">
              <Pick label="Account" value="Enterprise" size="h-[5px] w-[21px]" color="text-[#444]" up />
              <ul className={"absolute left-0 top-[5px] h-[17px] w-[20px] px-[2px] pt-[2px] text-[2px] leading-[4px] text-[#666] " + menuBox}>
                <li className="font-bold text-[#333]">Enterprise</li><li>Mid Market</li><li>SMB and Startup</li>
              </ul>
            </div>
          </Panel>
        </Sec>
      </div>
      <Sec title="CATEGORY - OPEN" className="mt-[12px]" gap="gap-[8px]">
        <nav className="flex h-[147px] w-[27px] flex-col border-r border-[#f3f3f5] pl-[3px] pt-[4px]">
          <span className="text-[2px] leading-[4px] text-[#333]">CONTENT</span>
          <ul className="flex flex-col gap-[4px] pt-[2px]"><SideItem kind="user" bold>People</SideItem><SideItem kind="org">Scores</SideItem><SideItem kind="org">Library</SideItem></ul>
          <span className="pt-[4px] text-[2px] leading-[6px] text-[#333]">DATA</span>
          <ul className="pt-[1px]"><SideItem kind="org">Scores</SideItem></ul>
          <span className="pt-[5px] text-[2px] leading-[6px] text-[#333]">DELIVERY</span>
          <ul className="flex flex-col gap-[4px] pt-[2px]"><SideItem kind="org">Sections</SideItem><SideItem kind="org">Templates</SideItem></ul>
        </nav>
      </Sec>
    </div>
  );
}

/* ---------- Forms ---------- */
function LabelPick({ label, value }) {
  return (
    <div className="pt-[3px]">
      <p className="px-px text-[3px] leading-[5px] text-[#444]">{label}</p>
      <Pick label={label} value={value} size="h-[7px] w-full" color="text-[#555]" />
    </div>
  );
}

function Forms() {
  const dot = "size-[3px] appearance-none border";
  return (
    <div className="flex items-start">
      <div className="flex w-[72px] shrink-0 flex-col">
        <Sec title="INPUT" gap="gap-[5px]">
          <Field label="Username" placeholder="email@address.com" className="ml-px" />
          <Field label="Password" placeholder="••••••••••••" className="ml-px" />
          <Field aria="No label" placeholder="No Label" className="ml-px" />
        </Sec>
        <Sec title="INPUT - HOVER" gap="gap-[5px]" className="mt-[9px]"><Field label="Username" labelColor="text-[#3c93f7]" tone="blue" placeholder="email@address.com" className="ml-px" /></Sec>
        <Sec title="INPUT - FILLED" gap="gap-[5px]" className="mt-[7px]"><Field label="Username" value="testemail@gmail.com" className="ml-px" /></Sec>
        <Sec title="LABEL" className="mt-[10px]"><span className="pl-px text-[#555]">Password</span></Sec>
        <div className="mt-[38px] flex">
          <Sec title="CHECKBOX" className="w-[40px] shrink-0" gap="gap-[3px]">
            <div className="flex gap-[2px] pl-[1px]">
              <input type="checkbox" aria-label="Checked" defaultChecked className={dot + " border-white bg-[#8fdd62]"} />
              <input type="checkbox" aria-label="Unchecked" className={dot + " border-[#a9d6dd] bg-[#8cc9d9]"} />
            </div>
          </Sec>
          <Sec title="RADIO BUTTON" gap="gap-[3px]">
            <div className="flex gap-[2px] pl-[1px]">
              <input type="radio" name="choice" aria-label="First" defaultChecked className={dot + " rounded-full border-white bg-[#8fdd62]"} />
              <input type="radio" name="choice" aria-label="Second" className={dot + " rounded-full border-[#a9d6dd] bg-[#8cc9d9]"} />
            </div>
          </Sec>
        </div>
        <Sec title="TOGGLE" className="mt-[10px]">
          <div className="flex flex-col gap-[2px] pl-[2px]">
            <input type="checkbox" role="switch" aria-label="On" defaultChecked className="h-[2px] w-[4px] appearance-none rounded-full bg-[#b4eb95]" />
            <input type="checkbox" role="switch" aria-label="Off" className="h-[2px] w-[3px] appearance-none rounded-full bg-[#c8ccd2]" />
            <input type="checkbox" role="switch" aria-label="Focused" className="h-[3px] w-[4px] appearance-none rounded-full border border-[#9ed8c8]" />
          </div>
        </Sec>
      </div>
      <div className="flex w-[74px] shrink-0 flex-col gap-[30px]">
        <Sec title="INPUT - ERROR" gap="gap-[5px]">
          <Field label="Username" tone="error" value="testemail@fake" />
          <span className="-mt-[4px] text-[3px] leading-[4px] text-[#dc6580]">⊙ Invalid Address</span>
        </Sec>
        <Sec title="INPUT - SUCCESS" gap="gap-[5px]"><Field label="Username" tone="success" value="testemail@fake" /></Sec>
      </div>
      <Sec title="EXAMPLE FORM" gap="gap-[2px]">
        <form className="ml-px flex w-[128px] flex-col gap-[4px] bg-[#e6e7ee] px-[2px] py-[3px]">
          <div className="h-[64px] bg-white px-[3px] pt-[2px]">
            <Title>SEGMENT SELECTION</Title>
            <div className="flex items-center gap-[3px] pt-[4px]"><Pick label="Source" value="Eloqua" color="text-[#555]" /><Counts /></div>
            <Field label="Search Segments" value="Enterprise" size="h-[8px] w-full" className="mb-[3px] mt-[6px]" />
            <SegmentList hot="text-[#d63a40]" />
          </div>
          <div className="h-[72px] bg-white px-[3px] pt-[2px]">
            <Title>MARKET FIT CONFIGURATION</Title>
            <div className="pt-px">
              <LabelPick label="Industry Classification" value="Eloqua" />
              <LabelPick label="Revenue Classification" value="$10-MM/YC" />
              <LabelPick label="Employee Size Classification" value="200-500" />
            </div>
            <div className="mt-[6px] flex justify-between border-t border-[#f4f4f6] px-px pt-[3px]"><Btn kind="danger">Delete Segment</Btn><Btn>Save Segment</Btn></div>
          </div>
        </form>
      </Sec>
    </div>
  );
}

/* ---------- Lists ---------- */
function Activity({ a, b, pre, when }) {
  return (
    <li className="flex h-[10px] items-center justify-between border-b border-[#f4f4f6] text-[#333]">
      <p className="whitespace-nowrap text-[3px] leading-[4px]">{a}<br />{pre} <b>{b}</b></p>
      <span className="whitespace-nowrap text-[2px] text-[#999]">{when}</span>
    </li>
  );
}

function Lists() {
  return (
    <Sec title="CARD LIST">
      <div className="flex items-start">
        <article className={"relative h-[79px] w-[56px] overflow-hidden pl-[3px] pt-[2px] " + cardBox}>
          <Title>USERS</Title>
          <Field label="Search" placeholder="Segment Ads" size="h-[8px] w-[48px]" className="mt-[5px]" />
          <div className="flex justify-between pt-[4px]">
            <ul className="w-[47px]">
              {[1, 2, 3, 4].map((n) => (
                <li key={n} className="h-[15px] border-b border-[#f6f6f8] text-[3px] leading-[5px] text-[#555]">
                  <div className="flex items-center justify-between">John Smith<Chevron /></div>
                  <div className="whitespace-nowrap text-[#999]">Group: <b className="text-[#444]">Dev Ops</b> &nbsp; Segments: <b className="text-[#444]">{n < 3 ? 2 : 1}</b></div>
                </li>
              ))}
            </ul>
            <i className="mr-px h-[38px] w-px bg-[#bbb]" />
          </div>
          <div className="pointer-events-none absolute inset-x-0 bottom-0 h-[14px] bg-gradient-to-b from-transparent to-black/10" />
        </article>
        <ul className="ml-[13px] w-[61px]">
          <Activity a="David Smith created a new segment" b="Segment 133" when="17m ago" />
          <Activity a="John Smith modified segment" b="Eloqua Segment" when="27m ago" />
          <Activity a={<>John Smith added user <b>Mike George</b></>} pre="to group" b="Admin" when="1 hour ago" />
        </ul>
        <ul className="ml-[10px] w-[61px]">
          <Activity a="David Smith created a new segment" b="Segment 133" when="17m ago" />
        </ul>
      </div>
    </Sec>
  );
}

/* ---------- Expression ---------- */
function Rule({ who = "Informa Attendees", faded, funnel, wide }) {
  return (
    <div className={"flex items-start gap-[2px] pr-[2px] " + (faded ? "opacity-50" : "")}>
      <svg viewBox="0 0 16 16" className="mt-px size-[5px] shrink-0" fill="#222" aria-hidden="true">
        {funnel ? <path d="M2 1h12v2l-4 4v8H6V7L2 3Z" /> : <path fillRule="evenodd" d="M0 0h16v16H0Z M8 3a3 3 0 1 0 .1 0Z M2 14c1-4 11-4 12 0Z" />}
      </svg>
      <div className="grow whitespace-nowrap text-[2px] leading-[4px] text-[#444]">
        <b className="block text-[3px] text-[#222]">{funnel ? "Content Filter" : "Data Attr."}</b>
        {funnel ? (
          <p>Contacts with content "Excel" linked Assets of "Standard Developers"</p>
        ) : (
          <p>Contacts linked to "{who}" object that have an Event Series of {wide && "\"Toronto"}<br />{wide ? "" : "\"Toronto "}Real Estate Forum 2018"</p>
        )}
      </div>
      <i className="mt-px size-[2px] rounded-full bg-[#a7e880]" />
    </div>
  );
}

function Chip({ children = "AND", size = "h-[4px] w-[8px]" }) {
  return <span className={"flex items-center justify-center bg-[#e7e9ef] text-[2px] font-bold leading-[4px] text-[#333] " + size}>{children}</span>;
}

function Hand({ red }) {
  return (
    <svg viewBox="0 0 8 8" className="size-[3px]" fill="#fff" stroke={red ? "#dc4a50" : "#555"} strokeWidth="1.2" aria-hidden="true">
      <path d="M2 1v4M2 3h4l1 2-1 2H3L1 5" />
    </svg>
  );
}

function Pair({ wide }) {
  return (
    <div className="flex flex-col items-start">
      <div className="w-full pl-[2px]"><Rule wide={wide} /></div>
      <div className="mt-[2px]"><Chip /></div>
      <div className="mt-[3px] w-full pl-[2px]"><Rule who="Oracle Volunteers" wide={wide} /></div>
    </div>
  );
}

function Drag({ className = "", red, faded, hand = true }) {
  return (
    <div className={"relative h-[13px] w-[107px] pl-[3px] " + className}>
      <Rule faded={faded} />
      {hand && <span className="absolute bottom-0 left-[66px]"><Hand red={red} /></span>}
    </div>
  );
}

function Expression() {
  const lifted = "bg-[#e7e9ef] shadow-[0_1px_2px_rgba(0,0,0,0.15)]";
  return (
    <div className="flex items-start">
      <div className="w-[164px] shrink-0">
        <div className="flex h-[152px] items-start">
          <Sec title="LOGIC BLOCK" className="w-[63px]">
            <Chip size="h-[5px] w-[10px]" />
            <Chip size="h-[5px] w-[10px]" />
            <Chip size="h-[5px] w-[10px]" />
            <Chip size="h-[5px] w-[10px]">OR</Chip>
          </Sec>
          <Sec title="LOGIC GROUP">
            <div className="h-[31px] w-[66px] border border-[#e9ebf1] bg-[#f4f6fb]" />
            <div className="flex h-[31px] w-[66px] items-center justify-center border border-[#e9ebf1] bg-[#f4f6fb]"><Hand /></div>
            <div className="flex h-[32px] w-[66px] items-center justify-center border border-[#e9ebf1] bg-[#f4f6fb] shadow-[0_1px_2px_rgba(0,0,0,0.1)]"><Hand red /></div>
          </Sec>
        </div>
        <Sec title="DRAG-AND-DROP" gap="gap-[7px]">
          <Drag hand={false} className="-mt-[5px]" />
          <Drag className={lifted} />
          <Drag className={lifted} red />
        </Sec>
        <h4 className={"mt-[6px] text-[4px] leading-[6px] " + heading}><span className="font-normal">STATUS/STATES //</span> OLD LOCATION</h4>
        <Drag hand={false} faded className="mt-[2px] border border-[#f0f0f2]" />
        <h4 className={"mt-[6px] text-[4px] leading-[6px] " + heading}><span className="font-normal">STATUS/STATES //</span> DROP TARGET LINE</h4>
        <Drag className={"mt-[2px] " + lifted} red />
        <div className="mt-px flex h-[6px] items-start">
          <i className="h-px w-[107px] bg-[#e7e9ef]" />
          <span className="text-[3px] leading-[3px] text-[#dc4a50]">2 Px<br />2 Px</span>
        </div>
      </div>
      <div className="flex flex-col">
        <Sec title="NESTED LOGIC GROUP">
          <div className="w-[123px] bg-[#f4f6fb] px-[4px] pb-[5px] pt-[4px]">
            <Pair wide />
            <div className="mt-[2px]"><Chip /></div>
            <div className="mt-[4px] bg-white px-[3px] pb-[3px] pt-[3px]">
              <Pair />
              <div className="mt-[2px]"><Chip /></div>
              <div className="mt-[4px] bg-[#f4f6fb] px-[3px] pb-[4px] pt-[4px]"><Pair /></div>
            </div>
          </div>
        </Sec>
        <Sec title="EXPRESSION CONTAINER" className="mt-[8px]">
          <div className={"flex h-[110px] w-[129px] flex-col " + cardBox}>
            <div className="mx-[2px] mt-[2px] h-[37px] bg-[#f4f6fb] px-[3px] pr-[14px] pt-[2px]">
              <Rule />
              <div className="mb-[2px] mt-px"><Chip size="h-[4px] w-[10px]">OR</Chip></div>
              <Rule who="Oracle Volunteers" faded />
            </div>
            <div className="grow px-[5px] pr-[16px] pt-[4px]">
              <Chip size="h-[4px] w-[10px]" />
              <div className="pt-[3px]"><Rule funnel /></div>
            </div>
            <div className="flex justify-end border-t border-[#f4f4f6] px-[6px] py-[2px]"><Btn kind="secondary">Add to Group</Btn></div>
          </div>
        </Sec>
        <Sec title="EXPRESSION CONTAINER (EMPTY)" className="mt-[8px]">
          <div className={"flex h-[31px] w-[129px] flex-col " + cardBox}>
            <div className="grow px-[2px] pt-[4px]"><p className="flex h-[9px] items-center border border-dashed border-[#f0f0f3] pl-[4px] text-[3px] leading-[4px] text-[#777]">Add a new item to begin</p></div>
            <div className="flex justify-end border-t border-[#f4f4f6] px-[6px] py-[2px]"><Btn kind="secondary">Add to Group</Btn></div>
          </div>
        </Sec>
      </div>
    </div>
  );
}

export default function App() {
  return (
    <main className="flex min-h-screen flex-col gap-[21px] overflow-hidden bg-[#f4f6fa] pl-[11px] pt-[8px] font-['Roboto'] text-[3px] leading-[4px] [text-rendering:geometricPrecision]">
      <div className="grid grid-cols-[208fr_139fr_287fr_147fr_147fr_147fr_88fr] items-start gap-[7px]">
        <Board label="Colors" title="COLORS" boardClass="min-h-[172px]"><Colors /></Board>
        <Board label="Spacing / Grid" title="SPACING / GRID" boardClass="min-h-[172px]"><Spacing /></Board>
        <Board label="Typography" title="TYPOGRAPHY" boardClass="min-h-[208px]"><Typography /></Board>
        <Board label="Buttons" title="BUTTONS" boardClass="min-h-[208px]"><Buttons /></Board>
        <Board label="Multistep Buttons" title="MULTISTEP BUTTONS" boardClass="min-h-[208px]"><Multistep /></Board>
        <Board label="Pills" title="PILLS" boardClass="min-h-[208px]">
          <Sec title="DEFAULT PILL"><span className="flex h-[4px] w-[14px] items-center justify-center rounded-full bg-[#444] text-[2px] leading-[4px] text-[#ddd]">Connected</span></Sec>
        </Board>
      </div>
      <div className="grid grid-cols-[585fr_330fr_235fr_34fr] items-start gap-[7px]">
        <Board label="Cards" title="CARDS" boardClass="min-h-[223px]"><Cards /></Board>
        <Board label="Page" title="PAGE" boardClass="min-h-[223px]"><PageBoard /></Board>
        <Board label="Progress Bars / Loading" title="PROGRESS BARS / LOADING" className="ml-[3px]" boardClass="min-h-[223px]"><Progress /></Board>
      </div>
      <div className="grid grid-cols-[139fr_137fr_148fr_342fr_256fr_148fr] items-start gap-[7px]">
        <Board label="Widgets" title="WIDGETS" boardClass="min-h-[208px]"><Widgets /></Board>
        <Board label="Dropdowns" title="DROPDOWNS" boardClass="min-h-[208px]"><Dropdowns /></Board>
        <Board label="Navbar" title="NAVBAR" boardClass="min-h-[208px]"><Navbar /></Board>
        <Board label="Modal" title="MODAL" boardClass="min-h-[208px]"><Modals /></Board>
        <Board label="Tabs" title="TABS" boardClass="min-h-[208px]"><Tabs /></Board>
      </div>
      <div className="grid grid-cols-[184fr_314fr_308fr_362fr_9fr] items-start gap-[7px]">
        <Board label="Sidebar" title="SIDEBAR" boardClass="min-h-[353px]"><Sidebar /></Board>
        <Board label="Forms" title="FORMS" className="ml-[6px]" boardClass="min-h-[319px]"><Forms /></Board>
        <Board label="Lists" title="LISTS" boardClass="min-h-[319px]"><Lists /></Board>
        <Board label="Expression" title="EXPRESSION" boardClass="min-h-[371px]"><Expression /></Board>
      </div>
    </main>
  );
}
